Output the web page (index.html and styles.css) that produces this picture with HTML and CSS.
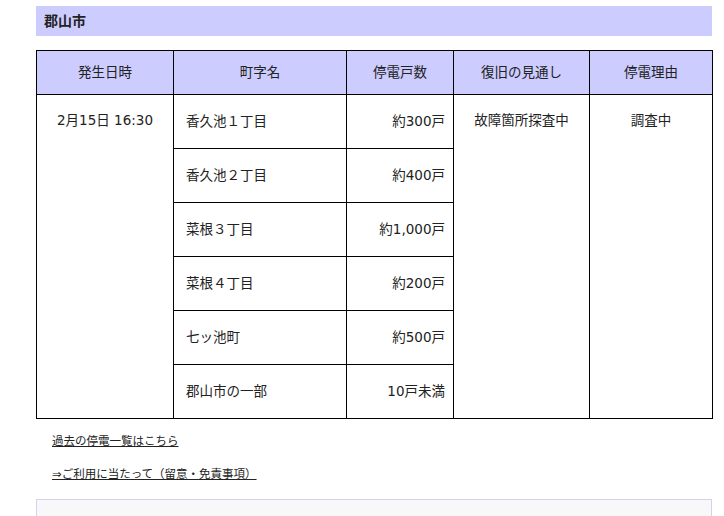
FILE: index.html
```html
<!DOCTYPE html>
<html lang="ja">
<head>
<meta charset="utf-8">
<title>停電情報 郡山市</title>
<link rel="stylesheet" href="styles.css">
</head>
<body>
<div class="wrap">
  <h2 class="city">郡山市</h2>
  <table class="outage">
    <colgroup>
      <col class="c1"><col class="c2"><col class="c3"><col class="c4"><col class="c5">
    </colgroup>
    <thead>
      <tr>
        <th>発生日時</th>
        <th>町字名</th>
        <th>停電戸数</th>
        <th>復旧の見通し</th>
        <th>停電理由</th>
      </tr>
    </thead>
    <tbody>
      <tr>
        <td rowspan="6" class="top center">2月15日 16:30</td>
        <td class="town">香久池１丁目</td>
        <td class="num">約300戸</td>
        <td rowspan="6" class="top center">故障箇所探査中</td>
        <td rowspan="6" class="top center">調査中</td>
      </tr>
      <tr><td class="town">香久池２丁目</td><td class="num">約400戸</td></tr>
      <tr><td class="town">菜根３丁目</td><td class="num">約1,000戸</td></tr>
      <tr><td class="town">菜根４丁目</td><td class="num">約200戸</td></tr>
      <tr><td class="town">七ッ池町</td><td class="num">約500戸</td></tr>
      <tr><td class="town">郡山市の一部</td><td class="num">10戸未満</td></tr>
    </tbody>
  </table>
  <ul class="links">
    <li><a href="#">過去の停電一覧はこちら</a></li>
    <li><a href="#">⇒ご利用に当たって（留意・免責事項）</a></li>
  </ul>
  <div class="notice"></div>
</div>
</body>
</html>
```

FILE: styles.css
```css
html, body {
  margin: 0;
  padding: 0;
  background: #fff;
}
body {
  font-family: "DejaVu Sans", "Noto Sans CJK JP", sans-serif;
  color: #222;
}
.wrap {
  width: 676px;
  margin-left: 36px;
  padding-top: 6px;
}
.city {
  margin: 0;
  height: 30px;
  line-height: 30px;
  padding-left: 8px;
  background: #ccccff;
  font-size: 14px;
  font-weight: bold;
  color: #222;
}
.outage {
  margin-top: 14px;
  width: 676px;
  table-layout: fixed;
  border-collapse: collapse;
  font-size: 13.5px;
  line-height: 18px;
}
.c1 { width: 137px; }
.c2 { width: 173px; }
.c3 { width: 107px; }
.c4 { width: 136px; }
.c5 { width: 123px; }
.outage th,
.outage td {
  border: 1px solid #000;
  padding: 0;
}
.outage th {
  background: #ccccff;
  font-weight: normal;
  height: 42px;
  padding-bottom: 1px;
  text-align: center;
  vertical-align: middle;
}
.outage td {
  height: 52px;
  padding-bottom: 1px;
  vertical-align: middle;
}
.outage td.top {
  vertical-align: top;
  padding-top: 16px;
  padding-bottom: 0;
}
.outage td.center {
  text-align: center;
}
.outage td.town {
  padding-left: 12px;
}
.outage td.num {
  text-align: right;
  padding-right: 8px;
}
.links {
  list-style: none;
  margin: 0;
  padding: 14px 0 0 16px;
  font-size: 11.5px;
  line-height: 16px;
}
.links li {
  margin-bottom: 17px;
}
.links a {
  color: #222;
  text-decoration: underline;
}
.notice {
  margin-top: 10px;
  height: 60px;
  border: 1px solid #d6d0f2;
  background: #f8f8fa;
}
```
